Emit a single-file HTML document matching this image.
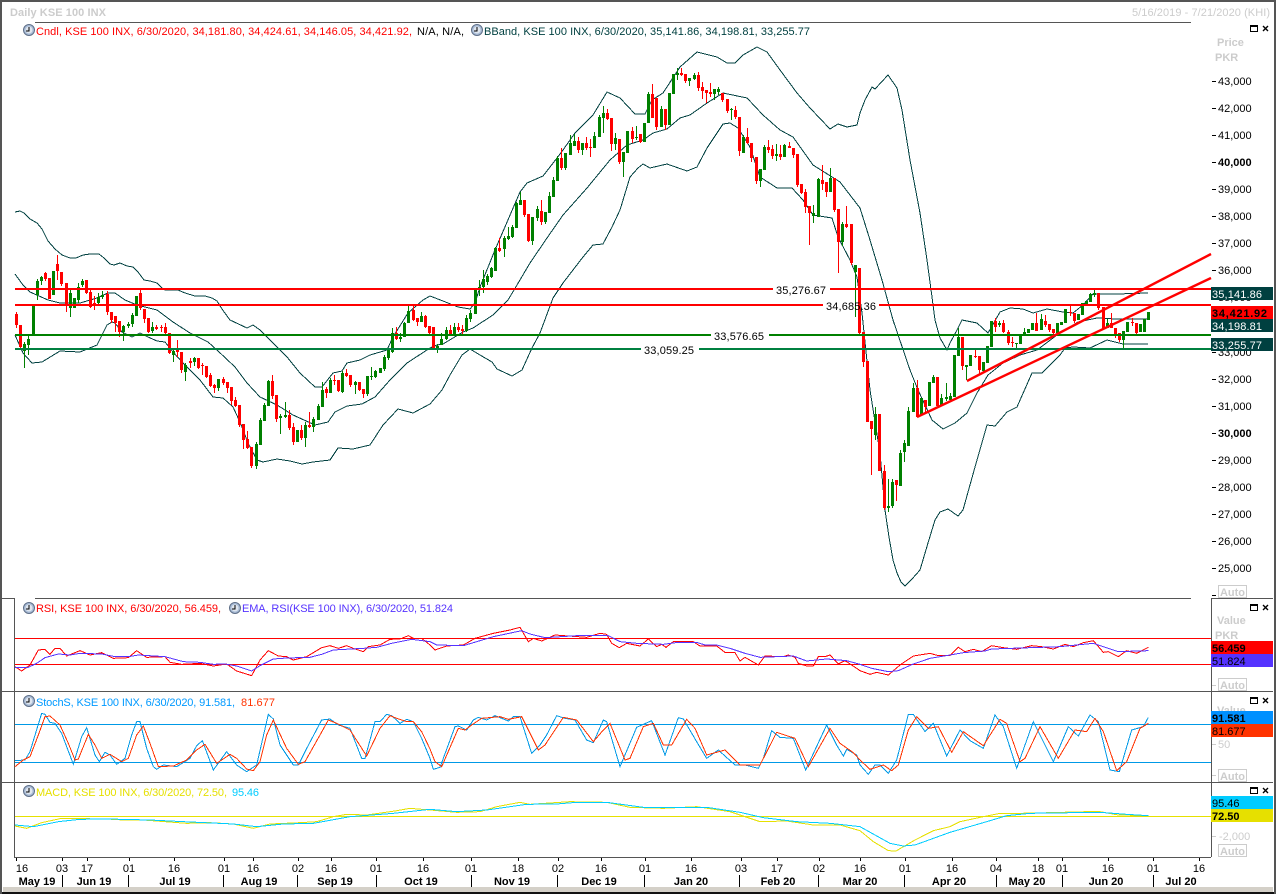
<!DOCTYPE html>
<html><head><meta charset="utf-8"><title>Daily KSE 100 INX</title>
<style>
html,body{margin:0;padding:0;background:#fff;width:1276px;height:894px;overflow:hidden}
svg{display:block}
text{font-family:"Liberation Sans","DejaVu Sans",sans-serif;font-size:11px}
.b{font-weight:bold}
.c text{text-anchor:middle}
.ln{fill:none;stroke-width:3}
polyline{shape-rendering:crispEdges}
</style></head><body>
<svg width="1276" height="894" viewBox="0 0 1276 894" xmlns="http://www.w3.org/2000/svg">
<rect width="1276" height="894" fill="#fff"/>

<!-- header -->
<text x="10" y="16" class="b" fill="#cccccc" textLength="96">Daily KSE 100 INX</text>
<text x="1132" y="16" fill="#cccccc" textLength="138">5/16/2019 - 7/21/2020 (KHI)</text>

<g shape-rendering="crispEdges">
<path d="M35 22.5H1191M35 598.5H1191M0 598.5H14M1211 598.5H1273M2 691.5H1273M2 782.5H1273M14 857.5H1211M14.5 598V857M1211.5 598V857" stroke="#555" fill="none"/>
</g>

<!-- Bollinger bands -->
<g fill="none" stroke="#004040" stroke-width="1" stroke-linejoin="round">
<polyline points="15,212 20,211 24,213 30,219 37,223 42,229 48,241 55,249 62,255 70,258 76,258 83,255 90,254 99,254 104,258 110,264 114,265 120,263 127,266 133,267 138,272 144,280 150,281 157,283 163,289 165,290 178,290 185,293 195,296 205,296 212,298 217,301 222,309 230,320 247,328 253,325 260,330 273,343 287,357 300,373 315,387 322,387 333,373 342,371 347,363 360,360 370,355 387,350 393,337 408,313 423,300 430,296 443,301 458,307 470,309 475,303 480,287 495,250 520,192 527,183 543,176 557,158 563,150 575,133 593,115 607,92 620,98 635,114 645,114 652,100 663,93 680,67 697,52 717,57 727,63 735,63 743,55 757,47 767,52 780,70 797,93 810,108 830,129 838,124 847,127 857,125 860,113 865,100 872,87 875,89 888,75 897,88 902,110 910,160 920,213 927,260 932,297 935,320 940,338 947,350 950,343 957,330 962,320 977,323 988,333 1000,312 1010,308 1023,309 1033,313 1047,309 1063,312 1073,313 1083,305 1093,294 1117,294 1148,293"/>
<polyline points="15,274 23,285 30,292 48,300 60,303 80,303 97,298 108,293 115,293 125,300 137,305 157,310 173,322 190,333 208,342 217,350 235,367 247,383 260,397 277,405 293,415 315,425 328,422 335,412 347,406 362,404 375,397 390,380 407,363 430,348 437,345 443,344 463,332 473,328 493,315 508,300 517,285 530,263 547,238 563,215 587,188 610,160 627,145 643,140 653,133 667,129 680,118 690,115 707,103 723,93 747,98 763,115 780,130 793,137 813,165 840,182 860,208 870,240 882,280 893,320 910,370 918,390 932,420 943,429 955,423 967,413 977,393 988,375 1003,363 1020,355 1037,350 1057,335 1078,322 1097,318 1117,319 1148,319"/>
<polyline points="15,335 23,353 32,363 42,362 60,351 80,352 97,345 107,325 112,322 115,323 122,332 132,337 140,333 148,337 157,341 165,342 173,352 183,363 200,380 213,397 223,398 233,407 240,422 248,443 257,460 263,462 277,459 290,461 302,464 313,462 330,460 338,448 353,449 370,445 383,425 398,409 413,413 430,404 442,390 450,375 462,355 470,349 480,355 492,362 497,369 512,376 522,370 532,348 540,333 553,298 563,283 583,257 593,245 603,244 612,227 620,210 630,177 638,168 643,164 650,168 667,164 687,171 697,167 707,148 717,133 723,124 730,123 738,128 750,147 760,177 777,188 792,188 803,200 813,215 832,218 838,237 850,260 857,277 862,313 870,390 876,428 880,453 885,510 889,537 893,560 897,573 901,582 905,586 912,579 920,570 928,543 935,520 940,512 948,509 958,516 963,510 975,467 987,425 995,426 1007,412 1017,407 1032,373 1042,373 1060,355 1065,348 1073,347 1090,348 1107,340 1123,344 1148,344"/>
</g>

<!-- candles -->
<g transform="translate(.5,0)" shape-rendering="crispEdges" fill="none">
<path stroke="#008000" stroke-width="1" d="M24 342V368M28 336V355M37 279V300M41 276V285M70 290V317M78 283V303M82 279V287M98 293V305M102 291V299M123 325V341M128 322V328M132 313V327M152 322V333M173 350V362M185 363V381M194 357V366M218 379V391M256 442V469M260 418V445M264 403V421M268 380V406M280 414V434M285 402V418M305 422V447M313 417V432M318 404V420M322 382V407M330 378V393M342 371V393M355 381V394M367 376V396M371 367V380M375 370V378M384 355V371M388 348V360M392 328V353M400 333V342M404 322V337M408 305V323M421 312V322M437 344V353M441 333V345M446 327V340M454 323V335M466 315V332M470 310V322M479 280V296M483 270V293M487 274V285M491 267V278M495 247V271M504 236V257M508 227V240M512 225V238M516 202V228M520 192V205M532 217V245M537 206V221M545 212V224M549 192V213M553 177V197M557 156V181M565 153V170M570 135V155M574 134V146M582 143V155M594 132V148M599 115V137M603 106V133M615 133V150M623 152V177M636 126V140M648 92V123M661 106V127M677 68V80M689 78V86M694 73V80M714 89V100M718 87V95M731 108V120M743 135V153M760 169V187M764 145V170M776 144V161M784 144V157M813 205V223M818 178V217M830 168V192M842 222V246M855 265V317M875 407V440M888 479V512M892 479V508M900 450V486M904 440V462M908 407V446M913 383V412M933 375V383M941 394V405M946 383V401M950 393V402M958 328V356M966 365V380M983 362V372M999 321V327M1016 343V348M1024 328V336M1041 314V330M1090 293V302M1094 290V297M1107 319V328M1123 331V348"/>
<path stroke="#008000" stroke-width="3" d="M24 344V351M28 339V345M33 305V335M37 281V295M41 277V281M53 271V295M70 293V308M74 298V308M78 287V300M82 281V285M98 297V303M102 295V297M123 326V332M128 324V326M132 315V324M136 296V316M152 327V331M173 351V355M185 365V372M194 358V362M218 379V388M256 444V466M260 420V445M264 405V421M268 381V406M280 416V418M285 415V417M297 430V442M305 425V438M313 419V427M318 406V420M322 390V407M330 380V393M342 373V392M355 382V385M367 376V394M371 376V377M375 371V377M380 368V373M384 357V369M388 350V358M392 333V352M400 337V339M404 323V337M408 311V323M421 316V322M437 346V348M441 339V345M446 330V339M454 327V335M466 318V331M470 313V319M475 289V314M479 287V290M483 279V287M487 276V282M491 268V277M495 248V271M504 238V249M508 236V239M512 227V237M516 203V228M520 200V205M532 217V241M537 209V218M545 212V222M549 196V213M553 180V197M557 158V181M565 153V168M570 143V155M574 141V146M582 143V150M594 136V148M599 117V137M603 113V118M615 138V144M623 152V162M627 131V153M636 137V138M644 123V142M648 94V123M661 109V127M669 93V125M673 74V94M677 73V75M689 78V81M694 75V79M714 89V94M718 89V92M731 109V110M743 137V153M760 169V181M764 147V170M776 154V156M784 145V157M813 213V216M818 179V217M830 178V192M842 224V242M855 265V272M875 414V435M888 506V508M892 482V506M900 453V486M904 443V452M908 411V446M913 388V412M921 398V415M929 382V406M933 377V383M941 398V405M946 397V399M950 396V400M954 355V397M958 337V356M966 365V367M970 355V366M983 362V371M987 346V363M991 321V347M999 323V325M1016 343V344M1020 335V344M1024 332V335M1028 329V333M1032 323V330M1041 319V330M1057 323V333M1061 322V325M1065 309V323M1078 314V320M1082 303V315M1086 301V304M1090 294V302M1094 293V295M1107 323V328M1123 331V340M1127 322V332M1140 324V332M1144 319V332M1148 312V320"/>
<path stroke="#ff0000" stroke-width="1" d="M16 312V328M20 325V350M45 272V281M57 255V280M61 272V286M66 283V312M86 280V294M90 290V308M94 296V310M107 291V315M111 312V323M115 316V332M119 321V337M140 289V310M144 309V323M148 318V333M156 325V330M161 325V332M165 323V334M169 333V354M177 340V357M181 352V373M190 358V368M198 358V369M202 363V375M206 366V378M210 373V387M214 384V393M223 377V385M227 382V393M231 387V405M235 397V407M239 405V427M243 424V449M247 431V449M251 447V468M272 375V399M276 395V422M289 410V430M293 423V445M301 425V440M309 412V428M326 387V398M334 375V385M338 380V392M346 369V377M350 375V387M359 382V391M363 389V398M396 327V340M413 304V321M417 318V326M425 315V328M429 326V334M450 325V335M458 323V332M462 325V334M499 238V252M524 200V217M528 214V242M541 200V225M561 148V170M578 137V153M586 137V150M590 139V157M607 109V120M611 118V151M619 139V164M632 127V143M640 134V143M652 84V118M656 98V130M665 109V130M681 68V76M685 74V83M698 72V91M702 82V99M706 90V103M710 83V97M722 93V102M727 99V113M735 106V119M739 117V156M747 128V144M751 143V162M756 157V184M768 140V153M772 145V159M780 145V160M789 142V148M793 148V158M797 154V187M801 184V194M805 189V213M809 206V245M822 165V190M826 182V197M834 178V212M838 209V273M846 206V228M851 224V265M859 268V334M863 332V367M871 421V475M884 465V510M896 480V501M917 380V417M925 400V412M962 337V370M975 349V358M979 356V374M995 318V332M1003 320V333M1008 330V345M1012 337V347M1036 313V331M1045 315V327M1049 324V332M1053 329V335M1070 305V316M1074 313V323M1098 293V310M1111 313V328M1115 328V338M1119 333V342M1132 318V326M1136 323V334"/>
<path stroke="#ff0000" stroke-width="3" d="M16 314V325M20 325V347M45 273V279M49 278V299M57 264V271M61 272V284M66 283V305M86 280V293M90 292V307M94 303V306M107 294V312M111 312V320M115 316V323M119 321V332M140 293V308M144 309V319M148 318V332M156 327V329M161 327V328M165 327V333M169 333V353M177 350V352M181 352V370M190 361V363M198 358V368M202 365V366M206 366V377M210 375V386M214 385V388M223 379V383M227 382V388M231 387V401M235 400V406M239 405V425M243 424V440M247 439V448M251 447V466M272 381V396M276 395V419M289 415V428M293 427V442M301 430V438M309 425V427M326 389V393M334 380V381M338 380V391M346 373V376M350 375V385M359 382V390M363 389V394M396 333V339M413 310V320M417 318V322M425 316V327M429 326V333M433 327V348M450 330V334M458 327V330M462 329V331M499 248V251M524 200V215M528 214V241M541 211V222M561 158V168M578 141V150M586 143V148M590 147V148M607 113V119M611 118V144M619 139V162M632 131V139M640 134V142M652 94V118M656 98V127M665 109V125M681 73V75M685 74V81M698 75V88M702 87V91M706 90V93M710 92V94M722 93V100M727 99V111M735 110V117M739 117V151M747 137V143M751 143V158M756 157V181M768 147V150M772 149V156M780 154V157M789 146V148M793 148V155M797 154V185M801 184V193M805 192V207M809 206V213M822 180V184M826 182V192M834 178V210M838 209V242M846 224V227M851 224V263M859 268V333M863 332V362M867 361V422M871 421V429M879 414V471M884 471V508M896 480V485M917 388V417M925 400V407M937 377V406M962 337V366M975 356V357M979 356V370M995 321V327M1003 323V332M1008 332V343M1012 342V343M1036 323V331M1045 321V325M1049 324V330M1053 329V333M1070 312V313M1074 313V321M1098 293V308M1103 307V329M1111 323V328M1115 328V334M1119 333V340M1132 322V323M1136 323V333"/>
</g>

<!-- horizontal levels -->
<g shape-rendering="crispEdges">
<rect x="15" y="288" width="758" height="2" fill="#ff0000"/><rect x="830" y="288" width="381" height="2" fill="#ff0000"/>
<rect x="15" y="304" width="808" height="2" fill="#ff0000"/><rect x="879" y="304" width="332" height="2" fill="#ff0000"/>
<rect x="15" y="334" width="696" height="2" fill="#008000"/><rect x="769" y="334" width="442" height="2" fill="#008000"/>
<rect x="15" y="348" width="626" height="2" fill="#008040"/><rect x="699" y="348" width="512" height="2" fill="#008040"/>
</g>
<text x="776" y="294" fill="#000" textLength="50">35,276.67</text>
<text x="826" y="310" fill="#000" textLength="50">34,685.36</text>
<text x="714" y="340" fill="#000" textLength="50">33,576.65</text>
<text x="644" y="354" fill="#000" textLength="50">33,059.25</text>

<!-- trendlines -->
<g stroke="#ff0000" stroke-width="2.4" fill="none">
<path d="M917 417L1211 278"/>
<path d="M967 381L1211 254"/>
</g>

<!-- legends -->
<g id="clk">
<circle cx="29" cy="30" r="5.5" fill="#a9bcd6" stroke="#5f6f88"/><circle cx="29" cy="30" r="3.5" fill="#dfe6ef"/><path d="M29 27V31H26" stroke="#000" fill="none" shape-rendering="crispEdges"/>
</g>
<g transform="translate(448,0)"><circle cx="29" cy="30" r="5.5" fill="#a9bcd6" stroke="#5f6f88"/><circle cx="29" cy="30" r="3.5" fill="#dfe6ef"/><path d="M29 27V31H26" stroke="#000" fill="none" shape-rendering="crispEdges"/></g>
<text x="36" y="35" fill="#ff0000" textLength="376">Cndl, KSE 100 INX, 6/30/2020, 34,181.80, 34,424.61, 34,146.05, 34,421.92,</text>
<text x="417" y="35" fill="#000" textLength="47">N/A, N/A,</text>
<text x="484" y="35" fill="#004040" textLength="326">BBand, KSE 100 INX, 6/30/2020, 35,141.86, 34,198.81, 33,255.77</text>

<g transform="translate(0,578)"><circle cx="29" cy="30" r="5.5" fill="#a9bcd6" stroke="#5f6f88"/><circle cx="29" cy="30" r="3.5" fill="#dfe6ef"/><path d="M29 27V31H26" stroke="#000" fill="none" shape-rendering="crispEdges"/></g>
<g transform="translate(206,578)"><circle cx="29" cy="30" r="5.5" fill="#a9bcd6" stroke="#5f6f88"/><circle cx="29" cy="30" r="3.5" fill="#dfe6ef"/><path d="M29 27V31H26" stroke="#000" fill="none" shape-rendering="crispEdges"/></g>
<text x="36" y="612" fill="#ff0000" textLength="185">RSI, KSE 100 INX, 6/30/2020, 56.459,</text>
<text x="242" y="612" fill="#5533ff" textLength="211">EMA, RSI(KSE 100 INX), 6/30/2020, 51.824</text>

<g transform="translate(0,671)"><circle cx="29" cy="30" r="5.5" fill="#a9bcd6" stroke="#5f6f88"/><circle cx="29" cy="30" r="3.5" fill="#dfe6ef"/><path d="M29 27V31H26" stroke="#000" fill="none" shape-rendering="crispEdges"/></g>
<text x="36" y="706" fill="#0099ff" textLength="199">StochS, KSE 100 INX, 6/30/2020, 91.581,</text>
<text x="241" y="706" fill="#ff3300" textLength="34">81.677</text>

<g transform="translate(0,761)"><circle cx="29" cy="30" r="5.5" fill="#a9bcd6" stroke="#5f6f88"/><circle cx="29" cy="30" r="3.5" fill="#dfe6ef"/><path d="M29 27V31H26" stroke="#000" fill="none" shape-rendering="crispEdges"/></g>
<text x="36" y="796" fill="#e6e000" textLength="191">MACD, KSE 100 INX, 6/30/2020, 72.50,</text>
<text x="232" y="796" fill="#00ccff" textLength="27">95.46</text>

<!-- indicator level lines -->
<g shape-rendering="crispEdges" fill="none">
<path d="M15 638.5H1211M15 664.5H1211" stroke="#ff0000"/>
<path d="M15 724.5H1211M15 762.5H1211" stroke="#0099e6"/>
<path d="M15 816.5H1211" stroke="#e6e000"/>
</g>

<!-- RSI -->
<g transform="translate(0,595) scale(.33333)" class="ln">
<polyline stroke="#ff0000" points="45,215 65,228 90,210 115,165 135,163 150,178 165,160 180,160 200,183 240,167 270,180 305,173 340,190 385,188 410,167 440,187 495,185 510,202 545,208 600,205 640,213 680,207 710,228 755,242 780,195 805,167 835,183 860,185 880,195 920,185 965,158 990,152 1015,160 1040,152 1060,160 1090,170 1105,155 1140,150 1170,133 1200,132 1225,122 1240,130 1265,130 1290,150"/>
<polyline stroke="#5533ff" points="45,217 85,217 110,205 135,188 175,177 210,180 240,175 305,177 345,185 385,185 415,180 495,185 550,200 600,202 640,208 675,207 710,213 755,228 780,212 820,192 860,189 930,187 965,178 1000,165 1090,160 1130,157 1175,145 1235,133 1290,140"/>
</g>
<g transform="translate(430,595) scale(.33333)" class="ln">
<polyline stroke="#ff0000" points="0,150 15,165 50,153 100,150 135,130 190,115 240,105 270,97 295,140 310,130 335,138 375,120 470,127 510,115 530,118 545,145 568,158 590,145 630,153 655,132 680,155 695,148 708,157 730,140 790,140 810,153 860,153 885,172 915,173 930,198 945,187 985,210 1005,183 1060,185 1075,180 1095,187 1105,205 1130,213 1150,213 1165,185 1185,185 1200,180 1225,207 1245,197 1265,210 1290,227"/>
<polyline stroke="#5533ff" points="0,140 20,150 100,152 190,125 275,107 300,117 345,128 440,122 535,122 570,140 620,145 700,148 745,142 800,142 825,150 860,150 900,160 945,175 990,187 1090,183 1130,198 1190,192 1250,197 1290,208"/>
</g>
<g transform="translate(860,595) scale(.33333)" class="ln">
<polyline stroke="#ff0000" points="0,227 30,238 50,232 85,240 120,210 160,183 210,175 235,182 270,182 295,157 315,170 340,163 365,170 395,152 430,158 470,163 490,158 515,152 545,155 580,162 615,148 640,155 670,143 700,137 730,172 745,170 775,185 800,167 830,175 865,157"/>
<polyline stroke="#5533ff" points="0,208 35,220 85,230 115,227 160,207 210,190 270,180 310,173 375,168 395,162 600,155 650,150 700,145 775,170 865,167"/>
</g>

<!-- Stoch -->
<g transform="translate(0,595) scale(.33333)" class="ln">
<polyline stroke="#0099e6" points="45,497 75,495 90,470 125,355 135,358 150,382 165,385 185,415 220,508 245,425 260,398 285,480 298,500 315,472 330,480 350,508 375,490 395,420 410,380 420,380 440,460 460,515 470,523 490,510 530,515 570,490 590,452 607,437 640,525 680,470 710,510 740,530 770,510 805,358 820,372 840,450 880,510 895,510 915,470 965,375 990,372 1015,390 1050,400 1085,490 1095,490 1125,380 1140,380 1160,358 1175,362 1200,385 1220,373 1240,380 1265,430 1290,490"/>
<polyline stroke="#ff3300" points="45,515 70,495 90,485 115,420 135,365 150,363 180,390 205,445 225,495 235,492 265,418 285,450 305,490 330,478 365,500 385,490 410,420 430,393 450,445 475,515 520,513 560,495 590,465 615,448 650,505 690,478 710,490 740,522 760,527 780,500 800,420 820,375 860,460 895,508 915,500 960,420 985,375 1010,385 1050,405 1100,483 1140,400 1170,362 1190,370 1220,380 1240,380 1265,410 1290,462"/>
</g>
<g transform="translate(430,595) scale(.33333)" class="ln">
<polyline stroke="#0099e6" points="0,490 10,523 30,517 75,395 85,393 110,405 130,375 145,367 170,375 195,362 235,378 250,365 270,365 305,475 330,450 350,420 380,362 405,370 435,375 470,435 490,443 520,375 530,380 570,515 620,397 665,377 705,480 745,368 760,372 800,440 830,490 865,465 915,510 945,510 985,520 1000,490 1025,407 1050,427 1090,430 1127,525 1190,390 1220,450 1240,483 1250,463 1280,480 1290,510"/>
<polyline stroke="#ff3300" points="0,462 15,500 35,515 85,400 105,405 125,390 155,370 210,365 235,373 275,365 325,465 345,450 400,367 440,375 490,440 520,405 540,385 585,495 600,490 640,395 670,385 700,450 725,450 770,373 795,400 830,480 885,465 930,510 990,510 1040,412 1095,430 1135,515 1200,400 1230,445 1270,473 1290,495"/>
</g>
<g transform="translate(860,595) scale(.33333)" class="ln">
<polyline stroke="#0099e6" points="0,510 25,538 45,510 60,510 85,535 110,495 145,358 160,358 195,410 220,385 260,483 300,405 330,437 370,460 405,360 430,395 470,520 520,380 580,500 625,395 655,423 690,360 715,380 750,525 778,530 815,405 850,395 865,367"/>
<polyline stroke="#ff3300" points="0,495 30,523 70,510 95,527 115,510 145,405 170,365 205,400 235,395 275,472 310,410 370,452 420,373 440,385 480,500 495,490 540,395 595,490 645,405 680,410 705,370 730,410 770,527 800,500 840,400 865,385"/>
</g>

<!-- MACD -->
<g transform="translate(0,595) scale(.33333)" class="ln">
<polyline stroke="#e6e000" points="45,693 80,700 125,683 185,670 320,672 370,675 430,675 560,685 630,683 700,687 760,700 810,687 900,683 950,680 1000,665 1040,658 1100,660 1185,648 1230,640 1290,645"/>
<polyline stroke="#00ccff" points="45,690 100,695 175,680 240,673 320,672 450,675 550,680 700,687 770,695 850,687 940,685 1050,665 1180,655 1290,643"/>
</g>
<g transform="translate(430,595) scale(.33333)" class="ln">
<polyline stroke="#e6e000" points="0,645 80,652 150,650 200,635 270,622 300,628 420,620 530,622 600,637 700,640 800,635 900,650 990,680 1070,678 1150,690 1230,690 1290,707"/>
<polyline stroke="#00ccff" points="0,643 80,650 170,645 290,628 380,627 440,622 530,622 640,637 830,637 930,652 1000,668 1100,680 1200,685 1290,695"/>
</g>
<g transform="translate(860,595) scale(.33333)" class="ln">
<polyline stroke="#e6e000" points="0,707 40,740 85,767 108,768 165,735 220,707 270,695 300,680 370,665 420,655 480,655 570,653 680,650 720,650 775,660 865,662"/>
<polyline stroke="#00ccff" points="0,695 90,745 130,753 165,750 270,712 380,680 440,662 510,655 640,653 720,652 800,658 865,662"/>
</g>

<!-- price axis -->
<text x="1217" y="46" class="b" fill="#cccccc">Price</text>
<text x="1215" y="61" class="b" fill="#cccccc">PKR</text>
<path d="M1212 81.5h4M1212 108.5h4M1212 135.5h4M1212 162.5h4M1212 189.5h4M1212 216.5h4M1212 243.5h4M1212 270.5h4M1212 297.5h4M1212 352.5h4M1212 379.5h4M1212 406.5h4M1212 433.5h4M1212 460.5h4M1212 487.5h4M1212 514.5h4M1212 541.5h4M1212 568.5h4M1212 595.5h4" stroke="#000" shape-rendering="crispEdges"/>
<g fill="#000">
<text x="1218" y="85">43,000</text><text x="1218" y="112">42,000</text><text x="1218" y="139">41,000</text><text x="1218" y="166" class="b">40,000</text><text x="1218" y="193">39,000</text><text x="1218" y="220">38,000</text><text x="1218" y="247">37,000</text><text x="1218" y="274">36,000</text><text x="1218" y="301">35,000</text><text x="1218" y="356">33,000</text><text x="1218" y="383">32,000</text><text x="1218" y="410">31,000</text><text x="1218" y="437" class="b">30,000</text><text x="1218" y="464">29,000</text><text x="1218" y="491">28,000</text><text x="1218" y="518">27,000</text><text x="1218" y="545">26,000</text><text x="1218" y="572">25,000</text>
</g>

<!-- value boxes main -->
<g shape-rendering="crispEdges">
<rect x="1211" y="287" width="62" height="13" fill="#004040"/>
<rect x="1211" y="306" width="62" height="13" fill="#ff0000"/>
<rect x="1211" y="319" width="62" height="13" fill="#004040"/>
<rect x="1211" y="338" width="62" height="13" fill="#004040"/>
</g>
<text x="1212" y="298" fill="#fff" textLength="50">35,141.86</text>
<text x="1212" y="317" fill="#000" class="b" textLength="55">34,421.92</text>
<text x="1212" y="330" fill="#fff" textLength="50">34,198.81</text>
<text x="1212" y="349" fill="#fff" textLength="50">33,255.77</text>

<!-- sub-panel axis -->
<text x="1217" y="624" class="b" fill="#cccccc">Value</text>
<text x="1215" y="639" class="b" fill="#cccccc">PKR</text>
<text x="1217" y="714" class="b" fill="#cccccc">Value</text>
<g shape-rendering="crispEdges">
<rect x="1211" y="641" width="62" height="13" fill="#ff0000"/>
<rect x="1211" y="654" width="62" height="13" fill="#5533ff"/>
<rect x="1211" y="711" width="62" height="13" fill="#0090ff"/>
<rect x="1211" y="724" width="62" height="13" fill="#ff3300"/>
<rect x="1211" y="796" width="62" height="13" fill="#00ccff"/>
<rect x="1211" y="809" width="62" height="13" fill="#e6e000"/>
</g>
<text x="1212" y="652" fill="#000" class="b">56.459</text>
<text x="1212" y="665" fill="#000">51.824</text>
<text x="1212" y="722" fill="#000" class="b">91.581</text>
<text x="1212" y="735" fill="#000">81.677</text>
<text x="1212" y="807" fill="#000">95.46</text>
<text x="1212" y="820" fill="#000" class="b">72.50</text>
<path d="M1212 685.5h4M1212 744.5h4M1212 775.5h4M1212 836.5h4" stroke="#cccccc" shape-rendering="crispEdges"/>
<text x="1218" y="748" fill="#cccccc">50</text>
<text x="1219" y="840" fill="#cccccc">-2,000</text>

<!-- Auto boxes -->
<g fill="#fff" stroke="#cccccc" shape-rendering="crispEdges">
<rect x="1218.5" y="585.5" width="28" height="12"/>
<rect x="1218.5" y="678.5" width="28" height="12"/>
<rect x="1218.5" y="769.5" width="28" height="12"/>
<rect x="1218.5" y="844.5" width="28" height="12"/>
</g>
<g fill="#cccccc" class="b" style="font-weight:bold">
<text x="1220" y="596" textLength="25" style="font-weight:bold">Auto</text>
<text x="1220" y="689" textLength="25" style="font-weight:bold">Auto</text>
<text x="1220" y="780" textLength="25" style="font-weight:bold">Auto</text>
<text x="1220" y="855" textLength="25" style="font-weight:bold">Auto</text>
</g>

<!-- window buttons -->
<g fill="none" stroke="#000" shape-rendering="crispEdges">
<path d="M1250.5 25.5h7v6h-7zM1250 26.5h8"/>
<path d="M1250.5 604.5h7v6h-7zM1250 605.5h8"/>
<path d="M1250.5 697.5h7v6h-7zM1250 698.5h8"/>
<path d="M1250.5 787.5h7v6h-7zM1250 788.5h8"/>
</g>
<g fill="none" stroke="#000" stroke-width="1.4">
<path d="M1263 26L1268 31M1268 26L1263 31"/>
<path d="M1263 605L1268 610M1268 605L1263 610"/>
<path d="M1263 698L1268 703M1268 698L1263 703"/>
<path d="M1263 788L1268 793M1268 788L1263 793"/>
</g>

<!-- time axis -->
<path shape-rendering="crispEdges" stroke="#000" fill="none" d="M16.5 858v3M62.5 858v3M87.5 858v3M129.5 858v3M174.5 858v3M224.5 858v3M253.5 858v3M298.5 858v3M331.5 858v3M376.5 858v3M423.5 858v3M471.5 858v3M518.5 858v3M558.5 858v3M601.5 858v3M645.5 858v3M691.5 858v3M741.5 858v3M777.5 858v3M819.5 858v3M860.5 858v3M905.5 858v3M952.5 858v3M996.5 858v3M1038.5 858v3M1062.5 858v3M1108.5 858v3M1153.5 858v3M1199.5 858v3M62.5 875v12M128.5 875v12M223.5 875v12M297.5 875v12M376.5 875v12M471.5 875v12M557.5 875v12M644.5 875v12M739.5 875v12M818.5 875v12M904.5 875v12M996.5 875v12M1062.5 875v12M1153.5 875v12"/>
<g class="c" fill="#000">
<text x="22" y="872">16</text><text x="62" y="872">03</text><text x="87" y="872">17</text><text x="129" y="872">01</text><text x="174" y="872">16</text><text x="224" y="872">01</text><text x="253" y="872">16</text><text x="298" y="872">02</text><text x="331" y="872">16</text><text x="376" y="872">01</text><text x="423" y="872">16</text><text x="471" y="872">01</text><text x="518" y="872">18</text><text x="558" y="872">02</text><text x="601" y="872">16</text><text x="645" y="872">01</text><text x="691" y="872">16</text><text x="741" y="872">03</text><text x="777" y="872">17</text><text x="819" y="872">02</text><text x="860" y="872">16</text><text x="905" y="872">01</text><text x="952" y="872">16</text><text x="996" y="872">04</text><text x="1038" y="872">18</text><text x="1062" y="872">01</text><text x="1108" y="872">16</text><text x="1153" y="872">01</text><text x="1199" y="872">16</text>
</g>
<g class="c b" fill="#000">
<text x="37" y="885">May 19</text><text x="94" y="885">Jun 19</text><text x="175" y="885">Jul 19</text><text x="259" y="885">Aug 19</text><text x="335" y="885">Sep 19</text><text x="421" y="885">Oct 19</text><text x="512" y="885">Nov 19</text><text x="599" y="885">Dec 19</text><text x="691" y="885">Jan 20</text><text x="778" y="885">Feb 20</text><text x="860" y="885">Mar 20</text><text x="949" y="885">Apr 20</text><text x="1027" y="885">May 20</text><text x="1106" y="885">Jun 20</text><text x="1181" y="885">Jul 20</text>
</g>

<!-- window frame -->
<g shape-rendering="crispEdges">
<rect x="3" y="887" width="1270" height="5" fill="#d4d0c8"/>
<rect x="0" y="892" width="1276" height="2" fill="#111"/>
<rect x="0" y="0" width="1276" height="2" fill="#555"/>
<rect x="0" y="0" width="2" height="894" fill="#555"/>
<rect x="1274" y="0" width="2" height="894" fill="#555"/>
</g>
</svg>
</body></html>
